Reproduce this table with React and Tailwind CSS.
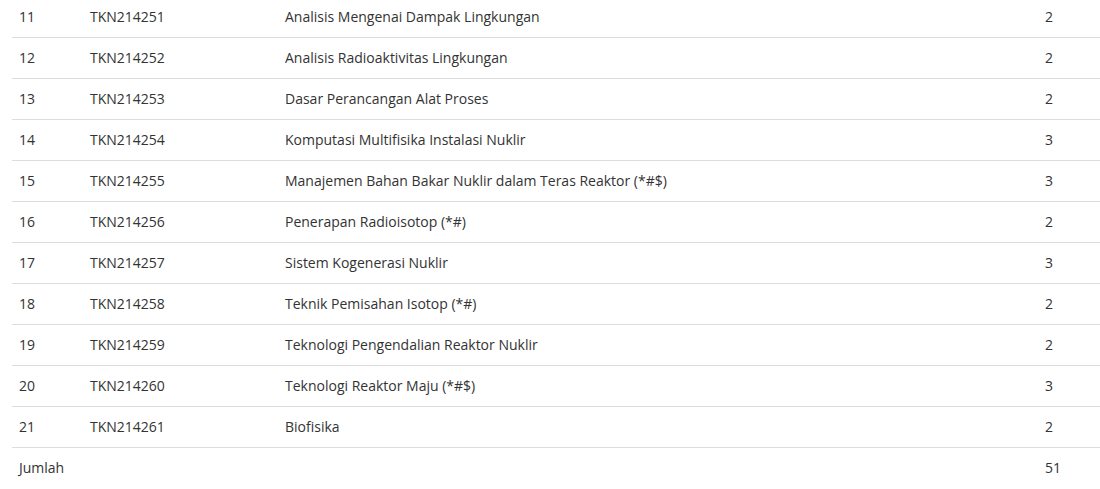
import React from 'react';

const rows = [
  ['11', 'TKN214251', 'Analisis Mengenai Dampak Lingkungan', 2],
  ['12', 'TKN214252', 'Analisis Radioaktivitas Lingkungan', 2],
  ['13', 'TKN214253', 'Dasar Perancangan Alat Proses', 2],
  ['14', 'TKN214254', 'Komputasi Multifisika Instalasi Nuklir', 3],
  ['15', 'TKN214255', 'Manajemen Bahan Bakar Nuklir dalam Teras Reaktor (*#$)', 3],
  ['16', 'TKN214256', 'Penerapan Radioisotop (*#)', 2],
  ['17', 'TKN214257', 'Sistem Kogenerasi Nuklir', 3],
  ['18', 'TKN214258', 'Teknik Pemisahan Isotop (*#)', 2],
  ['19', 'TKN214259', 'Teknologi Pengendalian Reaktor Nuklir', 2],
  ['20', 'TKN214260', 'Teknologi Reaktor Maju (*#$)', 3],
  ['21', 'TKN214261', 'Biofisika', 2],
];

const App = () => {
  return (
    <div className="bg-white min-h-screen font-['Open_Sans',sans-serif] text-[14px] leading-[20px] text-[#333]">
      <div className="pl-[12px] -mt-[4px]">
        <table className="w-[1088px] table-fixed border-collapse">
          <colgroup>
            <col className="w-[70px]" />
            <col className="w-[195px]" />
            <col className="w-[760px]" />
            <col className="w-[63px]" />
          </colgroup>
          <tbody>
            {rows.map((r) => (
              <tr key={r[0]} className="border-t border-[#ddd]">
                <td className="py-[10px] px-[7px]">{r[0]}</td>
                <td className="py-[10px] px-[8px]">{r[1]}</td>
                <td className="py-[10px] px-[8px]">{r[2]}</td>
                <td className="py-[10px] px-[8px]">{r[3]}</td>
              </tr>
            ))}
            <tr className="border-t border-[#ddd]">
              <td colSpan={3} className="py-[10px] px-[7px]">Jumlah</td>
              <td className="py-[10px] px-[8px]">51</td>
            </tr>
          </tbody>
        </table>
      </div>
    </div>
  );
};

export default App;
